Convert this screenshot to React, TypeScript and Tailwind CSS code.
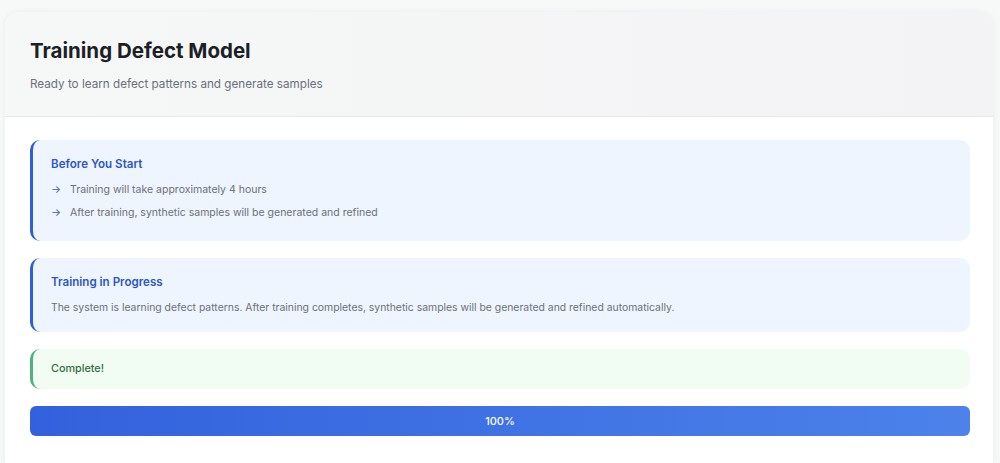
import React from 'react'

const font = { fontFamily: 'Inter, "Noto Sans", sans-serif' }

function InfoBox({ title, children }: { title: string; children: React.ReactNode }) {
  return (
    <div className="rounded-[10px] border-l-[3px] border-[#2f5fd6] bg-[#eff5fe] pl-[18px] pr-5 pt-[16px] pb-[16px]">
      <h3 className="text-[11.6px] font-semibold leading-[16px] text-[#2e56c8]">{title}</h3>
      {children}
    </div>
  )
}

export default function App() {
  const progress = 100
  return (
    <div className="min-h-screen bg-[#f7f8f8] pl-[5px] pr-[7px] pt-[12px]" style={font}>
      <div className="overflow-hidden rounded-t-[14px] bg-white shadow-[0_0_6px_rgba(0,0,0,0.06)]">
        <div className="border-b border-[#e6e8eb] bg-gradient-to-r from-[#f6f7f7] to-[#f3f3f5] px-[25px] pt-[27px] pb-[24px]">
          <h1 className="text-[20.5px] font-bold leading-[24px] text-[#1c1f26]">Training Defect Model</h1>
          <p className="mt-[13px] text-[11.7px] leading-[16px] text-[#6b7079]">
            Ready to learn defect patterns and generate samples
          </p>
        </div>

        <div className="flex flex-col gap-[17px] pl-[25px] pr-[23px] pt-[23px] pb-[27px]">
          <InfoBox title="Before You Start">
            <ul className="mt-[10px] mb-[4px] flex flex-col gap-[7px] text-[10.5px] leading-[16px] text-[#6b7079]">
              <li className="flex items-center gap-[9px]">
                <span className="text-[#3f5ba8]">→</span>
                <span>Training will take approximately 4 hours</span>
              </li>
              <li className="flex items-center gap-[9px]">
                <span className="text-[#3f5ba8]">→</span>
                <span>After training, synthetic samples will be generated and refined</span>
              </li>
            </ul>
          </InfoBox>

          <InfoBox title="Training in Progress">
            <p className="mt-[10px] text-[10.4px] leading-[16px] text-[#6b7079]">
              The system is learning defect patterns. After training completes, synthetic samples will be generated and refined automatically.
            </p>
          </InfoBox>

          <div className="rounded-[10px] border-l-[3px] border-[#4cb27e] bg-[#f1fcf3] py-[12px] pl-[18px]">
            <p className="text-[10.8px] font-medium leading-[16px] text-[#2f6f3e]">Complete!</p>
          </div>

          <div className="h-[30px] overflow-hidden rounded-[6px] bg-[#e5e7eb]">
            <div
              className="flex h-full items-center justify-center bg-gradient-to-r from-[#3361dd] to-[#4c82ea] text-[11px] font-medium text-white"
              style={{ width: `${progress}%` }}
            >
              {progress}%
            </div>
          </div>
        </div>
      </div>
    </div>
  )
}
